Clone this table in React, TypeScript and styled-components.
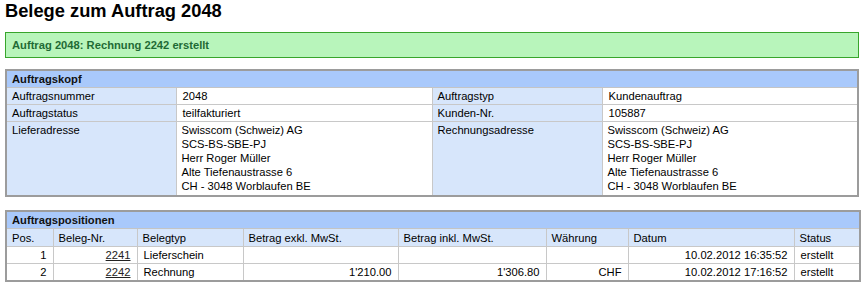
import React from 'react';
import styled, {createGlobalStyle} from "styled-components";

const GlobalStyle = createGlobalStyle`
    body {
        margin: 0;
        background: #ffffff;
        font-family: "Liberation Sans", Arial, sans-serif;
        font-size: 11.2px;
        color: #000;
    }
`

type Align = "left" | "right";

const addressLines = [
    "Swisscom (Schweiz) AG",
    "SCS-BS-SBE-PJ",
    "Herr Roger Müller",
    "Alte Tiefenaustrasse 6",
    "CH - 3048 Worblaufen BE",
];

const positions = [
    {pos: "1", nr: "2241", typ: "Lieferschein", exkl: "", inkl: "", cur: "", datum: "10.02.2012 16:35:52", status: "erstellt"},
    {pos: "2", nr: "2242", typ: "Rechnung", exkl: "1'210.00", inkl: "1'306.80", cur: "CHF", datum: "10.02.2012 17:16:52", status: "erstellt"},
];

const posColumns = [47, 84, 106, 155, 148, 82, 166, 66];

const Address = () => (
    <>
        {addressLines.map((line) => (
            <AddressLine key={line}>{line}</AddressLine>
        ))}
    </>
);

export default function App() {
    return (
        <Page>
            <GlobalStyle/>
            <Title>Belege zum Auftrag 2048</Title>
            <Message>Auftrag 2048: Rechnung 2242 erstellt</Message>

            <Table>
                <colgroup>
                    <col style={{width: 170}}/>
                    <col style={{width: 256}}/>
                    <col style={{width: 170}}/>
                    <col/>
                </colgroup>
                <tbody>
                <tr>
                    <Caption colSpan={4}>Auftragskopf</Caption>
                </tr>
                <tr>
                    <Label>Auftragsnummer</Label>
                    <Cell>2048</Cell>
                    <Label>Auftragstyp</Label>
                    <Cell>Kundenauftrag</Cell>
                </tr>
                <tr>
                    <Label>Auftragstatus</Label>
                    <Cell>teilfakturiert</Cell>
                    <Label>Kunden-Nr.</Label>
                    <Cell>105887</Cell>
                </tr>
                <tr>
                    <Label $top>Lieferadresse</Label>
                    <Cell $top><Address/></Cell>
                    <Label $top>Rechnungsadresse</Label>
                    <Cell $top><Address/></Cell>
                </tr>
                </tbody>
            </Table>

            <Table>
                <colgroup>
                    {posColumns.map((w, i) => (
                        <col key={i} style={{width: w}}/>
                    ))}
                </colgroup>
                <tbody>
                <tr>
                    <Caption colSpan={8}>Auftragspositionen</Caption>
                </tr>
                <tr>
                    <Label $tall>Pos.</Label>
                    <Label $tall>Beleg-Nr.</Label>
                    <Label $tall>Belegtyp</Label>
                    <Label $tall>Betrag exkl. MwSt.</Label>
                    <Label $tall>Betrag inkl. MwSt.</Label>
                    <Label $tall>Währung</Label>
                    <Label $tall>Datum</Label>
                    <Label $tall>Status</Label>
                </tr>
                {positions.map((p) => (
                    <tr key={p.pos}>
                        <Cell $align="right">{p.pos}</Cell>
                        <Cell $align="right"><DocLink href="#">{p.nr}</DocLink></Cell>
                        <Cell>{p.typ}</Cell>
                        <Cell $align="right">{p.exkl}</Cell>
                        <Cell $align="right">{p.inkl}</Cell>
                        <Cell $align="right">{p.cur}</Cell>
                        <Cell $align="right">{p.datum}</Cell>
                        <Cell>{p.status}</Cell>
                    </tr>
                ))}
                </tbody>
            </Table>
        </Page>
    );
}

const Page = styled.div`
    width: 854px;
    padding: 0 5px;
`

const Title = styled.h1`
    font-size: 18.3px;
    font-weight: 700;
    line-height: 22px;
    margin: 0;
`

const Message = styled.div`
    margin-top: 10px;
    height: 24px;
    line-height: 24px;
    padding: 0 6px;
    background-color: #b8f5bb;
    border: 1px solid #38a52c;
    color: #1f6b35;
    font-weight: 700;
`

const Table = styled.table`
    width: 854px;
    table-layout: fixed;
    border-collapse: collapse;
    border: 2px solid #9c9c9c;
    margin-top: 11px;

    & + & {
        margin-top: 13px;
    }
`

const Caption = styled.th`
    height: 16px;
    padding: 0 5px;
    background-color: #a9c9fb;
    border-bottom: 1px solid #c4c4c4;
    color: #111;
    font-weight: 700;
    text-align: left;
    line-height: 16px;
`

const Label = styled.td<{ $top?: boolean; $tall?: boolean }>`
    height: ${({$tall}) => ($tall ? "17px" : "16px")};
    padding: ${({$top}) => ($top ? "1px 5px 2px" : "0 5px")};
    background-color: #d7e6fb;
    border: 1px solid #c8c8c8;
    vertical-align: ${({$top}) => ($top ? "top" : "middle")};
    line-height: 14px;
    white-space: nowrap;
`

const Cell = styled.td<{ $top?: boolean; $align?: Align }>`
    height: 16px;
    padding: ${({$top}) => ($top ? "1px 5px 2px" : "0 6px")};
    background-color: #fff;
    border: 1px solid #c8c8c8;
    text-align: ${({$align}) => $align ?? "left"};
    vertical-align: ${({$top}) => ($top ? "top" : "middle")};
    line-height: 14px;
    white-space: nowrap;
`

const AddressLine = styled.div`
    line-height: 14px;
`

const DocLink = styled.a`
    color: #222;
    text-decoration: underline;
`
